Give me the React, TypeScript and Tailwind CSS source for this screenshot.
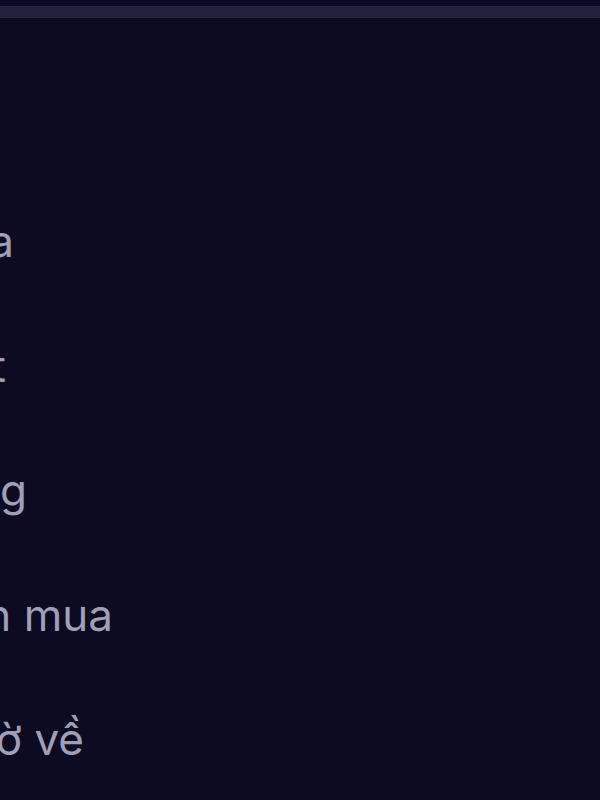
const items = [
  { label: "Chỉnh sửa", end: "w-[14px]" },
  { label: "Cài đặt", end: "w-[6px]" },
  { label: "Giỏ hàng", end: "w-[27px]" },
  { label: "Đơn mua", end: "w-[113px]" },
  { label: "Hàng chờ về", end: "w-[84px]" },
];

export default function App() {
  return (
    <div className="w-[600px] h-[800px] overflow-hidden bg-[#0c0b22] font-['Inter','Noto_Sans',sans-serif]">
      {/* top bar */}
      <div className="mt-[6px] h-[12px] bg-[#22203a] border-y border-[#2a2842]" />

      {/* menu list, pushed off the left edge */}
      <div className="pt-[161px] flex flex-col">
        {items.map((item) => (
          <div key={item.label} className="h-[124.5px] flex items-center">
            <div className={`${item.end} shrink-0 flex justify-end`}>
              <span className="whitespace-nowrap text-[44px] leading-[44px] text-[#a09fb6]">
                {item.label}
              </span>
            </div>
          </div>
        ))}
      </div>
    </div>
  );
}
